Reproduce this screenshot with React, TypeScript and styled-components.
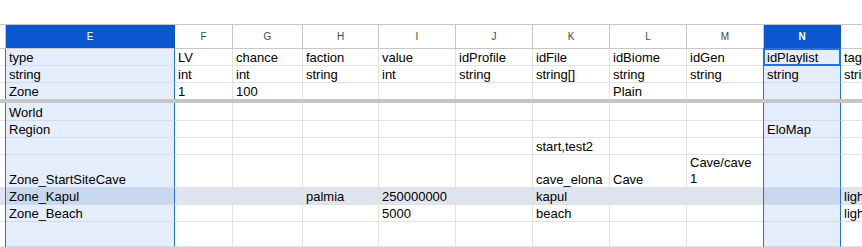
import React from 'react';
import styled, { createGlobalStyle, css } from 'styled-components';

const GlobalStyle = createGlobalStyle`
  html, body { margin: 0; padding: 0; background: #fff; }
  body { font-family: "Liberation Sans", Arial, sans-serif; overflow: hidden; }
`;

const COLS = '6px 169px 58px 70px 76px 77px 77px 77px 77px 77px 77px 120px';
const SELECTED = new Set([1, 10]);
const BLUE = '#1a73e8';

const Sheet = styled.div`
  width: 862px;
  height: 247px;
  overflow: hidden;
  background: #fff;
  display: flex;
  flex-direction: column;
`;

const TopSpace = styled.div`
  height: 24px;
  flex: none;
`;

const HeaderRow = styled.div`
  display: grid;
  grid-template-columns: ${COLS};
  height: 25px;
  flex: none;
  box-sizing: border-box;
  border-top: 1px solid #c7c7c7;
`;

const HeaderCell = styled.div<{ $sel?: boolean; $strong?: boolean }>`
  box-sizing: border-box;
  display: flex;
  align-items: center;
  justify-content: center;
  font-size: 10px;
  color: #444746;
  background: #fff;
  border-right: 1px solid #c7c7c7;
  border-bottom: 1px solid #c7c7c7;
  ${(p) =>
    p.$sel &&
    css`
      background: #0b57d0;
      color: #fff;
      border-right-color: #0b57d0;
    `}
  font-weight: ${(p) => (p.$strong ? 700 : 400)};
`;

const DataRow = styled.div<{ $h?: number }>`
  display: grid;
  grid-template-columns: ${COLS};
  flex: ${(p) => (p.$h ? `0 0 ${p.$h}px` : '1 1 auto')};
  height: ${(p) => (p.$h ? `${p.$h}px` : 'auto')};
`;

const Cell = styled.div<{
  $sel?: boolean;
  $hl?: boolean;
  $wrap?: boolean;
  $noBottom?: boolean;
  $active?: boolean;
  $corner?: boolean;
}>`
  position: relative;
  box-sizing: border-box;
  min-width: 0;
  display: flex;
  align-items: flex-end;
  padding: ${(p) => (p.$corner ? '0' : p.$wrap ? '0 3px 0 3px' : '0 3px 1px 3px')};
  font-size: 13px;
  line-height: ${(p) => (p.$wrap ? '16px' : '13px')};
  color: #000;
  white-space: ${(p) => (p.$wrap ? 'normal' : 'nowrap')};
  background: ${(p) =>
    p.$sel ? (p.$hl ? '#c7d7ee' : '#e4edfc') : p.$hl ? '#dfe5ee' : '#fff'};
  border-right: 1px solid ${(p) => (p.$sel ? BLUE : '#e2e2e2')};
  border-bottom: ${(p) =>
    p.$noBottom ? 'none' : `1px solid ${p.$sel ? '#d3dbe8' : '#e2e2e2'}`};
  ${(p) => p.$sel && css`box-shadow: -1px 0 0 ${BLUE};`}
  ${(p) =>
    p.$active &&
    css`
      &::after {
        content: '';
        position: absolute;
        inset: -1px;
        border: 2px solid ${BLUE};
        z-index: 1;
        pointer-events: none;
      }
    `}
`;

const FreezeBar = styled.div`
  height: 4px;
  flex: none;
  background: #c6c6c6;
`;

const LETTERS = ['', 'E', 'F', 'G', 'H', 'I', 'J', 'K', 'L', 'M', 'N', 'O'];

type RowDef = {
  cells: string[];
  h?: number;
  hl?: boolean;
  noBottom?: boolean;
  activeCol?: number;
};

const e = (n: number) => Array.from({ length: n }, () => '');

const frozen: RowDef[] = [
  {
    cells: ['type', 'LV', 'chance', 'faction', 'value', 'idProfile', 'idFile', 'idBiome', 'idGen', 'idPlaylist', 'tag'],
    h: 17,
    activeCol: 10,
  },
  {
    cells: ['string', 'int', 'int', 'string', 'int', 'string', 'string[]', 'string', 'string', 'string', 'string'],
    h: 17,
  },
  { cells: ['Zone', '1', '100', '', '', '', '', 'Plain', '', '', ''], h: 16, noBottom: true },
];

const body: RowDef[] = [
  { cells: ['World', ...e(10)], h: 18 },
  { cells: ['Region', '', '', '', '', '', '', '', '', 'EloMap', ''], h: 17 },
  { cells: ['', '', '', '', '', '', 'start,test2', '', '', '', ''], h: 17 },
  { cells: ['Zone_StartSiteCave', '', '', '', '', '', 'cave_elona', 'Cave', 'Cave/cave 1', '', ''], h: 33 },
  { cells: ['Zone_Kapul', '', '', 'palmia', '250000000', '', 'kapul', '', '', '', 'light'], h: 17, hl: true },
  { cells: ['Zone_Beach', '', '', '', '5000', '', 'beach', '', '', '', 'light'], h: 17 },
  { cells: e(11) },
];

const renderRow = (r: RowDef, key: string) => (
  <DataRow key={key} $h={r.h}>
    <Cell $corner $hl={r.hl} $noBottom={r.noBottom} />
    {r.cells.map((text, i) => {
      const col = i + 1;
      return (
        <Cell
          key={col}
          $sel={SELECTED.has(col)}
          $hl={r.hl}
          $noBottom={r.noBottom}
          $active={r.activeCol === col}
          $wrap={text === 'Cave/cave 1'}
        >
          {text}
        </Cell>
      );
    })}
  </DataRow>
);

export default function App() {
  return (
    <>
      <GlobalStyle />
      <Sheet>
        <TopSpace />
        <HeaderRow>
          {LETTERS.map((l, i) => (
            <HeaderCell key={i} $sel={SELECTED.has(i)} $strong={i === 10}>
              {l}
            </HeaderCell>
          ))}
        </HeaderRow>
        {frozen.map((r, i) => renderRow(r, `f${i}`))}
        <FreezeBar />
        {body.map((r, i) => renderRow(r, `b${i}`))}
      </Sheet>
    </>
  );
}
